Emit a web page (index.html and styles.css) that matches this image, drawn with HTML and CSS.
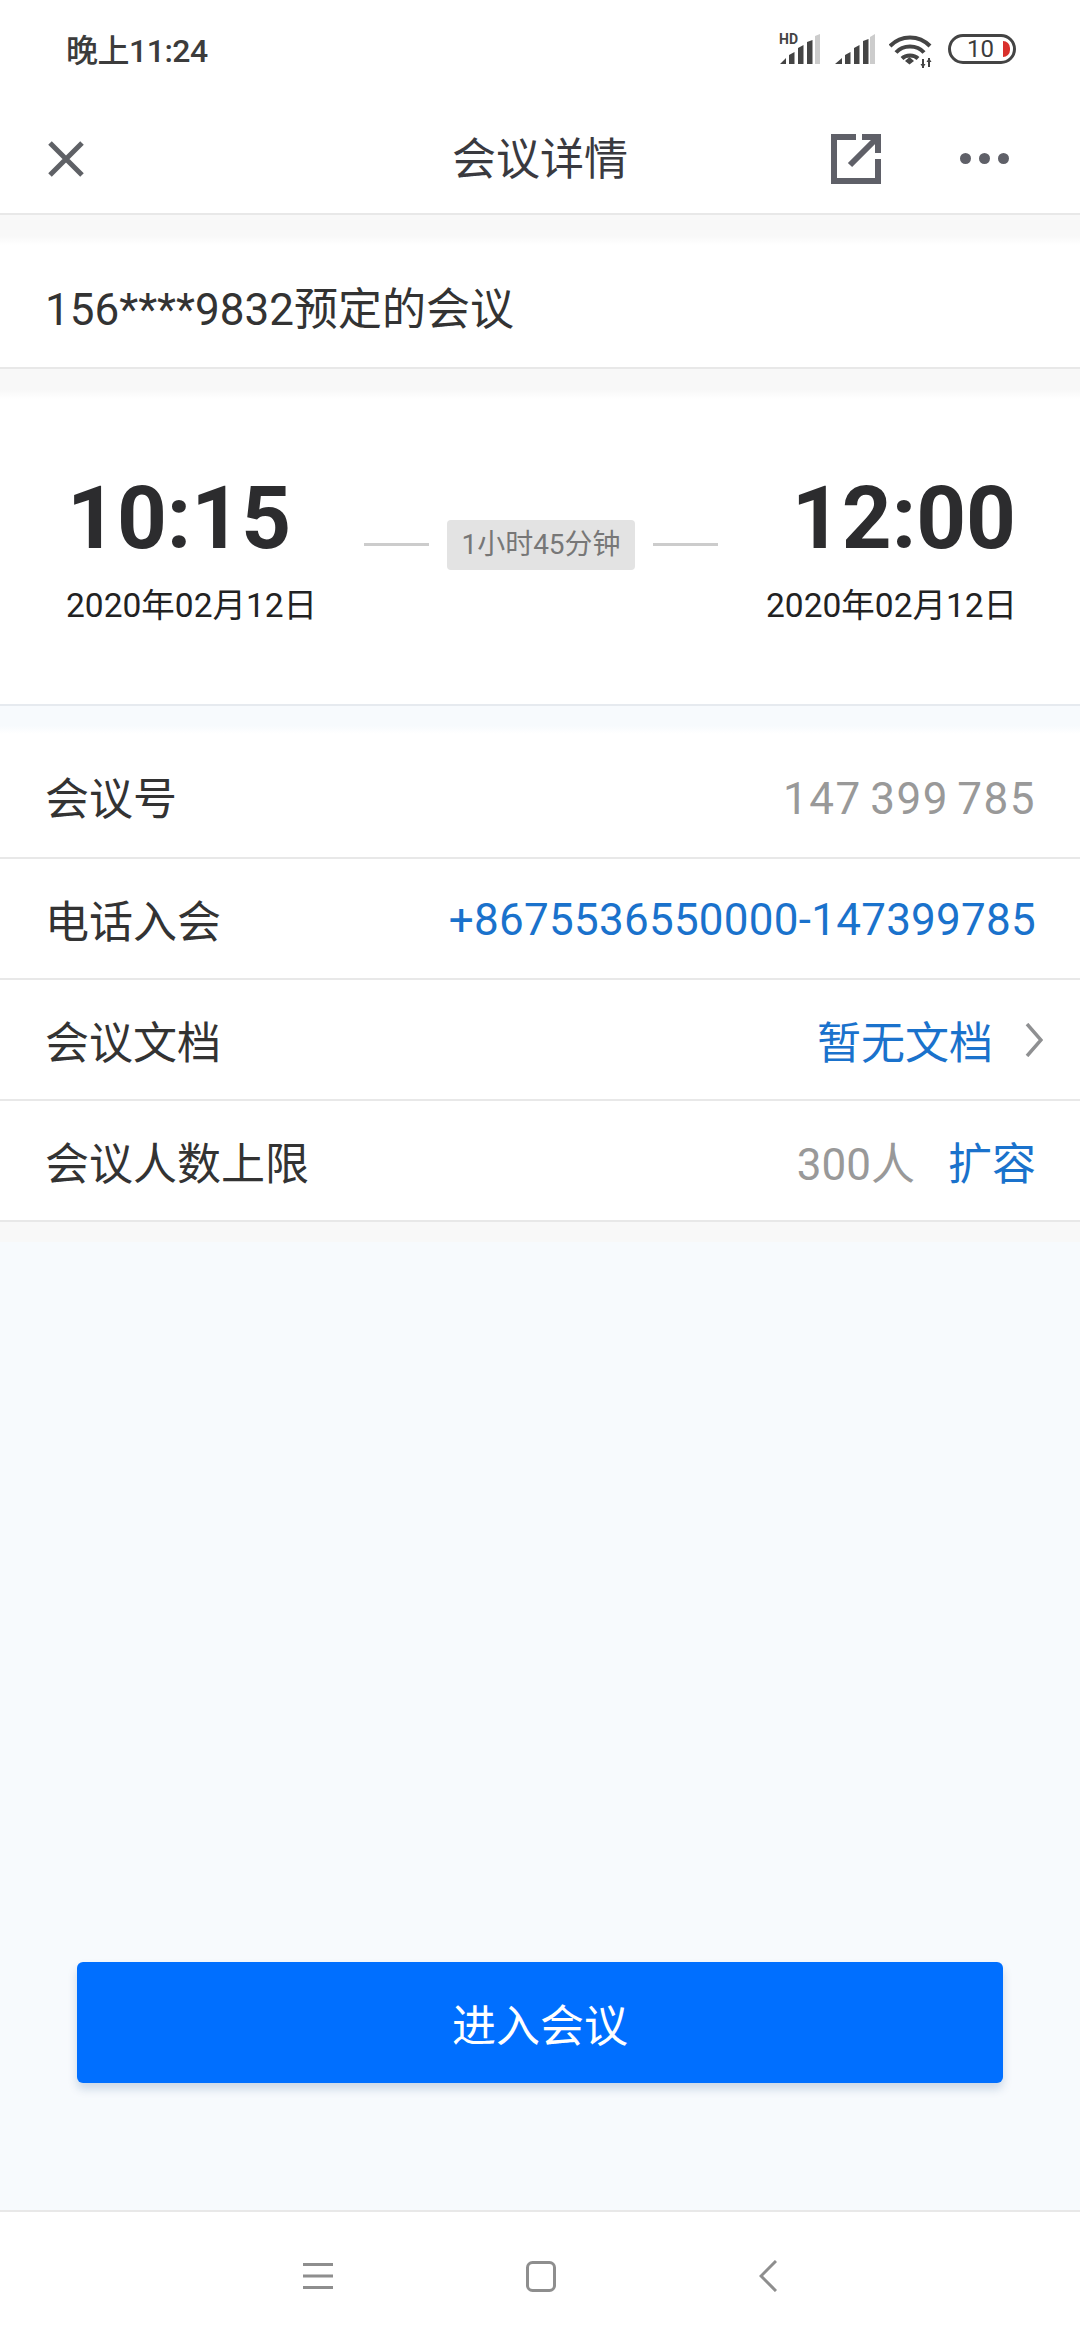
FILE: index.html
```html
<!DOCTYPE html>
<html lang="zh-CN">
<head>
    <meta charset="UTF-8">
    <meta name="viewport" content="width=device-width, initial-scale=1.0">
    <title>会议详情</title>
    <link rel="stylesheet" href="styles.css">
</head>
<body>
    <div class="status-bar">
        <span class="clock">晚上11:24</span>
        <div class="status-icons">
            <svg class="signal-hd" width="42" height="34" viewBox="0 -4 42 34">
                <text class="hd" x="0" y="10">HD</text>
                <path fill="#444" d="M1 30l6-6v6zM10 30v-9l5.500-3v12zM19 30V14l5.500-3v19zM28 30V8l5.500-2v24z"/>
                <path fill="#ccc" d="M36 30V2l5-2v30z"/>
            </svg>
            <svg class="signal" width="40" height="30" viewBox="0 0 40 30">
                <path fill="#444" d="M0 30l7-6v6zM10 30v-9l5.500-3v12zM19 30V14l5.500-3v19zM28 30V7l5.500-2v25z"/>
                <path fill="#ccc" d="M35 30V3l5-3v30z"/>
            </svg>
            <svg class="wifi" width="44" height="34" viewBox="0 0 44 34">
                <path fill="none" stroke="#444" stroke-width="4" d="M1 11C12 -0.500 30 -0.500 41 11M7 17.500C14 9.500 28 9.500 35 17.500M13 23.500C17 19.500 25 19.500 29 23.500"/>
                <path fill="#444" d="M20.500 22l4.500 4-4.500 3.500-4.500-3.500z"/>
                <path fill="none" stroke="#444" stroke-width="2" d="M34 24v9M40 23v9"/>
                <path fill="#444" d="M31.500 29h5L34 33zM37.500 27h5L40 23z"/>
            </svg>
            <div class="battery">
                <span class="battery-num">10</span>
                <span class="battery-low"></span>
            </div>
        </div>
    </div>

    <header class="top-bar">
        <svg class="close-icon" width="36" height="36" viewBox="0 0 36 36">
            <path fill="none" stroke="#5f6166" stroke-width="5" d="M2 2l32 32M34 2L2 34"/>
        </svg>
        <h1 class="page-title">会议详情</h1>
        <div class="top-actions">
            <svg class="share-icon" width="50" height="50" viewBox="0 0 50 50">
                <path fill="none" stroke="#5f6068" stroke-width="6" d="M25 3H3v44h44V25"/>
                <path fill="none" stroke="#5f6068" stroke-width="6" d="M31 3h16v16M46 4L19 31"/>
            </svg>
            <div class="more-dots"><i></i><i></i><i></i></div>
        </div>
    </header>

    <div class="band"></div>
    <section class="meeting-name">156****9832预定的会议</section>
    <div class="band"></div>

    <section class="time-card">
        <div class="time-col">
            <div class="time">10:15</div>
            <div class="date">2020年02月12日</div>
        </div>
        <div class="duration">
            <span class="dash"></span>
            <span class="duration-text">1小时45分钟</span>
            <span class="dash"></span>
        </div>
        <div class="time-col right">
            <div class="time">12:00</div>
            <div class="date">2020年02月12日</div>
        </div>
    </section>

    <div class="band blue"></div>

    <section class="info-list">
        <div class="row first">
            <span>会议号</span>
            <span class="grey spaced">147 399 785</span>
        </div>
        <div class="row">
            <span>电话入会</span>
            <span class="link phone">+8675536550000-147399785</span>
        </div>
        <div class="row">
            <span>会议文档</span>
            <span class="row-right doc">
                <span class="link">暂无文档</span>
                <svg width="18" height="34" viewBox="0 0 18 34">
                    <path fill="none" stroke="#8f9092" stroke-width="3.500" d="M2 1l14 16L2 33"/>
                </svg>
            </span>
        </div>
        <div class="row">
            <span>会议人数上限</span>
            <span class="row-right">
                <span class="grey">300人</span>
                <span class="link">扩容</span>
            </span>
        </div>
    </section>

    <main class="content">
        <div class="band short"></div>
        <button class="enter-btn">进入会议</button>
    </main>

    <nav class="nav-bar">
        <svg width="30" height="26" viewBox="0 0 30 26">
            <path fill="none" stroke="#8e8e8e" stroke-width="3" d="M0 1.500h30M0 13h30M0 24.500h30"/>
        </svg>
        <svg width="30" height="31" viewBox="0 0 30 31">
            <rect x="1.500" y="1.500" width="27" height="28" rx="5" fill="none" stroke="#8e8e8e" stroke-width="3"/>
        </svg>
        <svg width="18" height="32" viewBox="0 0 18 32">
            <path fill="none" stroke="#8e8e8e" stroke-width="3" d="M17 1L2 16l15 15"/>
        </svg>
    </nav>
</body>
</html>
```

FILE: styles.css
```css
* {
    box-sizing: border-box;
}

body {
    font-family: Roboto, "Noto Sans CJK SC", sans-serif;
    background: #fff;
    margin: 0;
    width: 1080px;
    height: 2340px;
    display: flex;
    flex-direction: column;
    color: #333;
    overflow: hidden;
}

.status-bar {
    height: 96px;
    display: flex;
    align-items: center;
    justify-content: space-between;
    padding: 2px 64px 0 66px;
}

.clock {
    font-size: 32px;
    font-weight: 500;
    letter-spacing: -0.5px;
    color: #3c3c3c;
    margin-bottom: 3px;
}

.status-icons {
    display: flex;
    align-items: center;
    gap: 14px;
}

.signal-hd {
    margin-top: -4px;
}

.hd {
    font-family: Roboto, sans-serif;
    font-size: 14px;
    font-weight: 700;
    fill: #444;
}

.wifi {
    margin: 6px 1px 0 0;
}

.battery {
    width: 68px;
    height: 30px;
    border: 3px solid #444;
    border-radius: 15px;
    display: flex;
    align-items: center;
    justify-content: flex-end;
    gap: 9px;
    padding-right: 3px;
}

.battery-num {
    font-size: 24px;
    color: #3c3c3c;
}

.battery-low {
    width: 7px;
    height: 16px;
    background: #d9302c;
    border-radius: 0 8px 8px 0;
}

.top-bar {
    height: 119px;
    display: grid;
    grid-template-columns: 1fr auto 1fr;
    align-items: center;
    padding: 8px 71px 0;
    border-bottom: 2px solid #e8e8e8;
}

.close-icon {
    margin-left: -23px;
}

.page-title {
    margin: 0;
    padding-bottom: 5px;
    font-size: 44px;
    font-weight: 400;
    color: #3a3a3f;
}

.top-actions {
    display: flex;
    align-items: center;
    justify-content: flex-end;
    gap: 79px;
}

.more-dots {
    display: flex;
    gap: 8px;
}

.more-dots i {
    width: 11px;
    height: 11px;
    border-radius: 50%;
    background: #5f6068;
}

.band {
    height: 30px;
    background: linear-gradient(#f8f8f8 70%, #fff);
}

.band.blue {
    height: 28px;
    background: linear-gradient(#f7fafd 70%, #fff);
}

.band.short {
    height: 20px;
    background: #f8f8f8;
}

.meeting-name {
    height: 124px;
    padding: 0 0 0 45px;
    display: flex;
    align-items: center;
    font-size: 44px;
    border-bottom: 2px solid #e8e8e8;
}

.time-card {
    height: 307px;
    padding: 0 64px 4px 66px;
    display: flex;
    align-items: center;
    justify-content: space-between;
    border-bottom: 2px solid #e6eaef;
}

.time-col {
    width: 250px;
}

.time-col.right {
    text-align: right;
}

.time {
    font-size: 87px;
    font-weight: 700;
    line-height: 96px;
    color: #2c2c2e;
}

.time-col:first-child .time {
    padding-left: 1px;
}

.date {
    font-size: 33.500px;
    line-height: 48px;
    margin-top: 16px;
    white-space: nowrap;
    color: #222;
}

.time-col.right .date {
    margin-right: 2px;
}

.duration {
    display: flex;
    align-items: center;
    gap: 18px;
    margin-top: -10px;
}

.dash {
    width: 65px;
    height: 3px;
    background: #ccc;
}

.duration-text {
    width: 188px;
    height: 50px;
    line-height: 50px;
    text-align: center;
    font-size: 28px;
    color: #777;
    background: #e3e3e3;
    border-radius: 4px;
}

.info-list {
    font-size: 44px;
}

.row {
    height: 121px;
    padding: 0 44px 0 45px;
    display: flex;
    align-items: center;
    justify-content: space-between;
    border-bottom: 2px solid #e8e8e8;
}

.row.first {
    height: 125px;
}

.row-right {
    display: flex;
    align-items: center;
    gap: 33px;
}

.row-right.doc {
    margin-right: -7px;
    gap: 32px;
}

.grey {
    color: #999;
}

.spaced {
    letter-spacing: 1.500px;
    word-spacing: -4px;
    margin-top: 6px;
}

.link {
    color: #1a72cc;
}

.phone {
    letter-spacing: 0.250px;
    margin-top: 2px;
}

.content {
    flex: 1;
    background: #f7fafd;
    display: flex;
    flex-direction: column;
    justify-content: space-between;
    padding-bottom: 127px;
}

.enter-btn {
    display: block;
    width: 926px;
    height: 121px;
    margin: 0 auto;
    padding: 0;
    font-family: inherit;
    font-size: 44px;
    color: #fff;
    background: #006fff;
    border: none;
    border-radius: 6px;
    box-shadow: 0 6px 10px rgba(0, 60, 120, 0.18);
}

.nav-bar {
    height: 130px;
    display: flex;
    align-items: center;
    justify-content: center;
    gap: 193px;
    border-top: 2px solid #e8e8e8;
}

.nav-bar svg:last-child {
    margin-left: 10px;
}
```
